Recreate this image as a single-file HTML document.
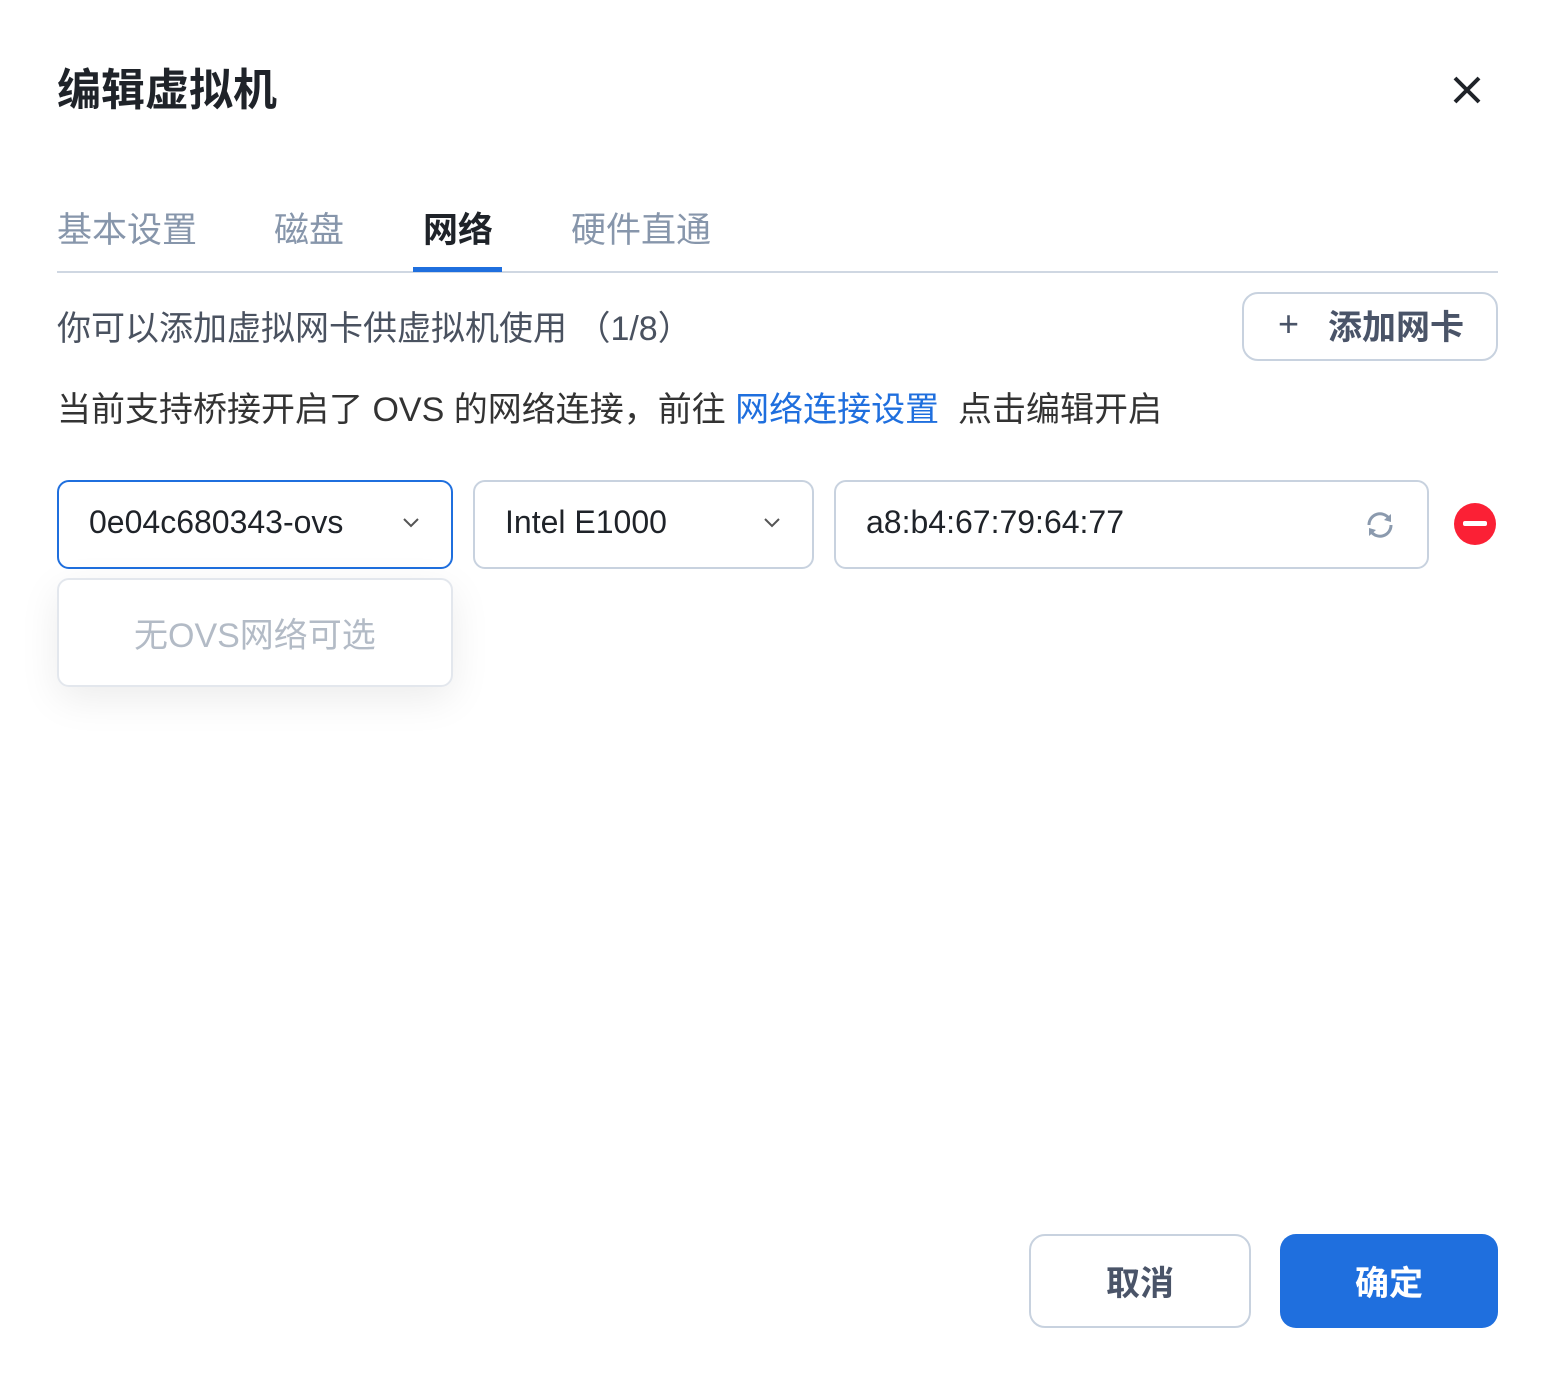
<!DOCTYPE html>
<html><head><meta charset="utf-8"><style>
body{margin:0;width:1545px;height:1374px;background:#fff;font-family:"Liberation Sans","Noto Sans CJK SC",sans-serif;position:relative;overflow:hidden;color:#333}
.a{position:absolute;white-space:nowrap}
.box{position:absolute;border:2px solid #c8d2df;border-radius:12px;box-sizing:border-box}
</style></head><body>
<div class="a" style="left:57px;top:54px;font-size:44px;font-weight:bold;color:#1f2329">编辑虚拟机</div>
<svg class="a" style="left:1452px;top:75px" width="30" height="30"><path d="M3 3L27 27M27 3L3 27" stroke="#1f2329" stroke-width="4"/></svg>
<div class="a" style="left:57px;top:202px;font-size:35px;color:#8796ab">基本设置</div>
<div class="a" style="left:274px;top:202px;font-size:35px;color:#8796ab">磁盘</div>
<div class="a" style="left:423px;top:202px;font-size:35px;font-weight:bold;color:#1f2329">网络</div>
<div class="a" style="left:571px;top:202px;font-size:35px;color:#8796ab">硬件直通</div>
<div class="a" style="left:57px;top:271px;width:1441px;height:2px;background:#cfd7e2"></div>
<div class="a" style="left:413px;top:267px;width:89px;height:5px;background:#1f6fde"></div>
<div class="a" style="left:57px;top:301px;font-size:34px;color:#4a5260">你可以添加虚拟网卡供虚拟机使用 （1/8）</div>
<div class="box" style="left:1242px;top:292px;width:256px;height:69px;border-radius:16px"></div>
<div class="a" style="left:1278px;top:303px;font-size:36px;color:#4a5468">+</div>
<div class="a" style="left:1328px;top:300px;font-size:34px;font-weight:bold;color:#4a5468">添加网卡</div>
<div class="a" style="left:57px;top:382px;font-size:34px;color:#333">当前支持桥接开启了 OVS 的网络连接，前往 <span style="color:#1f6fde">网络连接设置</span>&nbsp; 点击编辑开启</div>
<div class="box" style="left:57px;top:480px;width:396px;height:89px;border-color:#1f6fde"></div>
<div class="a" style="left:89px;top:504px;font-size:32px;color:#1f2329">0e04c680343-ovs</div>
<svg class="a" style="left:402px;top:517px" width="18" height="12"><path d="M2 2L9 9L16 2" stroke="#555" stroke-width="2" fill="none"/></svg>
<div class="box" style="left:473px;top:480px;width:341px;height:89px"></div>
<div class="a" style="left:505px;top:504px;font-size:32px;color:#1f2329">Intel E1000</div>
<svg class="a" style="left:763px;top:517px" width="18" height="12"><path d="M2 2L9 9L16 2" stroke="#555" stroke-width="2" fill="none"/></svg>
<div class="box" style="left:834px;top:480px;width:595px;height:89px"></div>
<div class="a" style="left:866px;top:504px;font-size:32px;color:#1f2329">a8:b4:67:79:64:77</div>
<svg class="a" style="left:1364px;top:509px" width="32" height="32" viewBox="0 0 32 32"><path d="M5 16A11 11 0 0 1 25 9.5M27 16A11 11 0 0 1 7 22.5" stroke="#8b9aae" stroke-width="3" fill="none"/><path d="M27 5L27 13L20 11Z M5 27L5 19L12 21Z" fill="#8b9aae"/></svg>
<div class="a" style="left:1454px;top:503px;width:42px;height:42px;border-radius:50%;background:#fb2035"></div>
<div class="a" style="left:1463px;top:521px;width:24px;height:5px;background:#fff;border-radius:2px"></div>
<div class="box" style="left:57px;top:578px;width:396px;height:109px;border-color:#e3e7ed;box-shadow:0 12px 40px rgba(0,0,0,0.08)"></div>
<div class="a" style="left:134px;top:608px;font-size:34px;color:#b3bbc6">无OVS网络可选</div>
<div class="box" style="left:1029px;top:1234px;width:222px;height:94px;border-radius:16px"></div>
<div class="a" style="left:1029px;top:1256px;width:222px;text-align:center;font-size:34px;font-weight:bold;color:#4a5468">取消</div>
<div class="a" style="left:1280px;top:1234px;width:218px;height:94px;border-radius:16px;background:#1f6fde"></div>
<div class="a" style="left:1280px;top:1256px;width:218px;text-align:center;font-size:34px;font-weight:bold;color:#fff">确定</div>
</body></html>
